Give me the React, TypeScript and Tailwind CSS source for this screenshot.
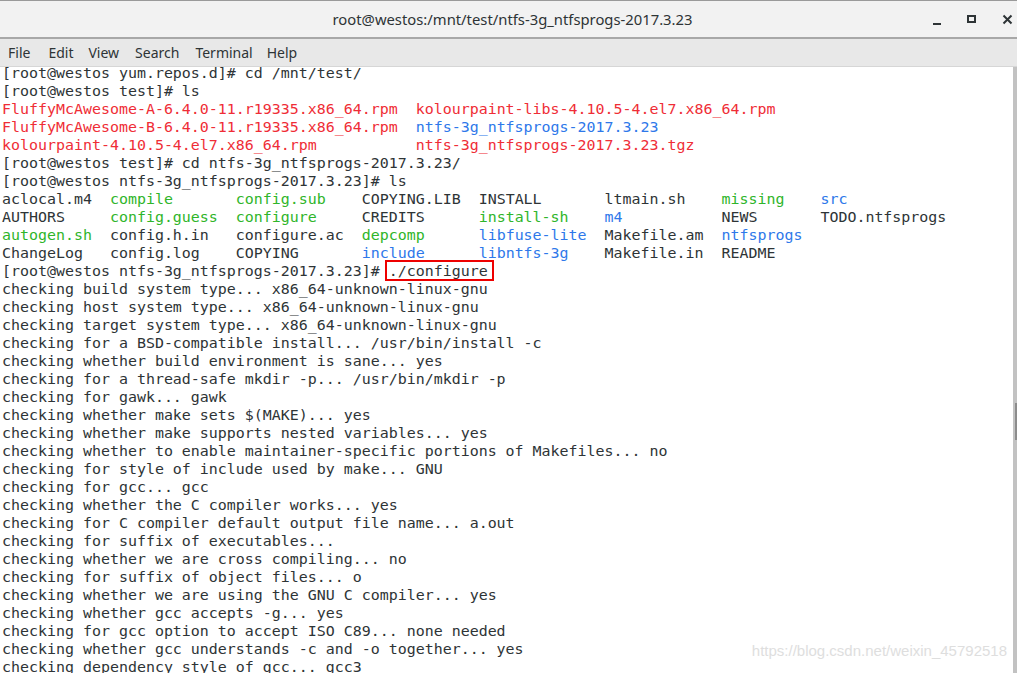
const RED = 'text-[#ef2d36]';
const GREEN = 'text-[#2fb52a]';
const BLUE = 'text-[#2e78ea]';

type Seg = [string, string?];

const pad = (s: string, n: number) => s.padEnd(n, ' ');

// ls output of the source folder, column widths as the terminal printed them
const widths = [12, 14, 14, 13, 14, 13, 11, 0];
const lsRows: Seg[][] = [
  [['aclocal.m4'], ['compile', GREEN], ['config.sub', GREEN], ['COPYING.LIB'], ['INSTALL'], ['ltmain.sh'], ['missing', GREEN], ['src', BLUE]],
  [['AUTHORS'], ['config.guess', GREEN], ['configure', GREEN], ['CREDITS'], ['install-sh', GREEN], ['m4', BLUE], ['NEWS'], ['TODO.ntfsprogs']],
  [['autogen.sh', GREEN], ['config.h.in'], ['configure.ac'], ['depcomp', GREEN], ['libfuse-lite', BLUE], ['Makefile.am'], ['ntfsprogs', BLUE]],
  [['ChangeLog'], ['config.log'], ['COPYING'], ['include', BLUE], ['libntfs-3g', BLUE], ['Makefile.in'], ['README']],
].map(row => row.map(([t, c], i) => [i < row.length - 1 ? pad(t, widths[i]) : t, c] as Seg));

const checks = [
  'checking build system type... x86_64-unknown-linux-gnu',
  'checking host system type... x86_64-unknown-linux-gnu',
  'checking target system type... x86_64-unknown-linux-gnu',
  'checking for a BSD-compatible install... /usr/bin/install -c',
  'checking whether build environment is sane... yes',
  'checking for a thread-safe mkdir -p... /usr/bin/mkdir -p',
  'checking for gawk... gawk',
  'checking whether make sets $(MAKE)... yes',
  'checking whether make supports nested variables... yes',
  'checking whether to enable maintainer-specific portions of Makefiles... no',
  'checking for style of include used by make... GNU',
  'checking for gcc... gcc',
  'checking whether the C compiler works... yes',
  'checking for C compiler default output file name... a.out',
  'checking for suffix of executables... ',
  'checking whether we are cross compiling... no',
  'checking for suffix of object files... o',
  'checking whether we are using the GNU C compiler... yes',
  'checking whether gcc accepts -g... yes',
  'checking for gcc option to accept ISO C89... none needed',
  'checking whether gcc understands -c and -o together... yes',
  'checking dependency style of gcc... gcc3',
];

const before: Seg[][] = [
  [['[root@westos yum.repos.d]# cd /mnt/test/']],
  [['[root@westos test]# ls']],
  [[pad('FluffyMcAwesome-A-6.4.0-11.r19335.x86_64.rpm', 46), RED], ['kolourpaint-libs-4.10.5-4.el7.x86_64.rpm', RED]],
  [[pad('FluffyMcAwesome-B-6.4.0-11.r19335.x86_64.rpm', 46), RED], ['ntfs-3g_ntfsprogs-2017.3.23', BLUE]],
  [[pad('kolourpaint-4.10.5-4.el7.x86_64.rpm', 46), RED], ['ntfs-3g_ntfsprogs-2017.3.23.tgz', RED]],
  [['[root@westos test]# cd ntfs-3g_ntfsprogs-2017.3.23/']],
  [['[root@westos ntfs-3g_ntfsprogs-2017.3.23]# ls']],
  ...lsRows,
];

function Line({ segs }: { segs: Seg[] }) {
  return (
    <div className="h-[18px] leading-[18px] whitespace-pre">
      {segs.map(([t, c], i) => (
        <span key={i} className={c ?? ''}>
          {t}
        </span>
      ))}
    </div>
  );
}

function WindowButtons() {
  return (
    <div className="absolute right-0 top-0 flex h-[37px] items-center">
      <svg width="10" height="10" viewBox="0 0 10 10" className="mr-[25px] mt-[4px]">
        <rect x="1" y="6" width="8" height="2" fill="#2e3436" />
      </svg>
      <svg width="9" height="9" viewBox="0 0 9 9" className="mr-[26px] -mt-[1px]">
        <rect x="1" y="1" width="7" height="6" fill="none" stroke="#2e3436" strokeWidth="2" />
      </svg>
      <svg width="11" height="11" viewBox="0 0 11 11" className="mr-[4px] -mt-[1px]">
        <path d="M1.5 1.5 L9.5 9.5 M9.5 1.5 L1.5 9.5" stroke="#2e3436" strokeWidth="2" />
      </svg>
    </div>
  );
}

export default function App() {
  return (
    <div className="flex h-[673px] w-[1017px] flex-col overflow-hidden bg-white">
      {/* title bar */}
      <div className="relative h-[39px] shrink-0 border-t border-[#9a9a9a] border-b-2 border-b-[#a8a8a8] bg-[#f2f2f2]">
        <div className="flex h-[36px] items-center justify-center pl-[8px] font-['Noto_Sans',sans-serif] text-[14.8px] text-[#2e3436]">
          root@westos:/mnt/test/ntfs-3g_ntfsprogs-2017.3.23
        </div>
        <WindowButtons />
      </div>

      {/* menu bar */}
      <div className="flex h-[28px] shrink-0 items-center border-b border-[#d6d6d6] bg-[#e8e8e8] pl-[8px] font-['Noto_Sans',sans-serif] text-[14px] text-[#2e3436]">
        <span className="mr-[18px]">File</span>
        <span className="mr-[15px]">Edit</span>
        <span className="mr-[16px]">View</span>
        <span className="mr-[16px]">Search</span>
        <span className="mr-[14px]">Terminal</span>
        <span>Help</span>
      </div>

      {/* terminal */}
      <div className="relative flex min-h-0 flex-1">
        <div className="min-w-0 flex-1 overflow-hidden">
          <div className="-mt-[3px] pl-[2px] font-['DejaVu_Sans_Mono',monospace] text-[14.95px] text-[#2e3436]">
            {before.map((segs, i) => (
              <Line key={i} segs={segs} />
            ))}
            <div className="h-[18px] leading-[18px] whitespace-pre">
              {'[root@westos ntfs-3g_ntfsprogs-2017.3.23]# '}
              <span className="relative">
                ./configure
                <span className="absolute -left-[4px] -right-[6px] -top-[2px] -bottom-[1px] border-2 border-[#ee0000]" />
              </span>
            </div>
            {checks.map((t, i) => (
              <Line key={i} segs={[[t]]} />
            ))}
          </div>
        </div>

        {/* scrollbar */}
        <div className="relative w-[4px] shrink-0 bg-[#c2c2c2]">
          <div className="absolute right-0 top-[336px] h-[37px] w-[2px] bg-[#8c8c8c]" />
        </div>

        <div className="pointer-events-none absolute bottom-[11px] right-[10px] font-['Liberation_Sans',Arial,sans-serif] text-[15px] text-[#dedede]">
          https://blog.csdn.net/weixin_45792518
        </div>
      </div>
    </div>
  );
}
